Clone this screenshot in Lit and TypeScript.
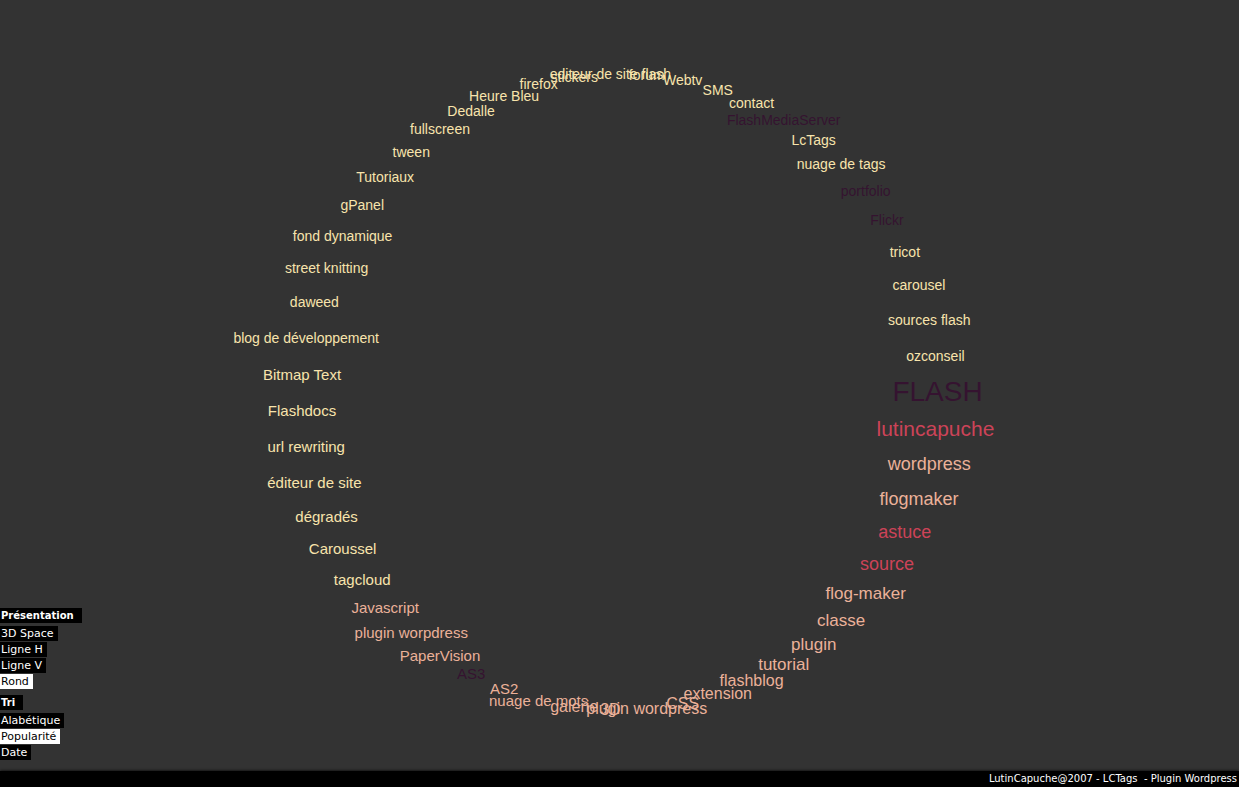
import { LitElement, html, css } from "lit";
import { customElement, state } from "lit/decorators.js";
import { classMap } from "lit/directives/class-map.js";
import { styleMap } from "lit/directives/style-map.js";

type Tone = "plum" | "red" | "peach" | "cream";
type Size = "s14" | "s15" | "s16" | "s17" | "s18" | "s21" | "s28";
interface Tag { name: string; size: Size; tone: Tone; }

const group = (size: Size, tone: Tone, ...names: string[]): Tag[] =>
  names.map((name) => ({ name, size, tone }));

// Ordered by popularity, starting at three o'clock and going clockwise.
const TAGS: Tag[] = [
  ...group("s28", "plum", "FLASH"),
  ...group("s21", "red", "lutincapuche"),
  ...group("s18", "peach", "wordpress", "flogmaker"),
  ...group("s18", "red", "astuce", "source"),
  ...group("s17", "peach", "flog-maker", "classe", "plugin", "tutorial"),
  ...group("s16", "peach", "flashblog", "extension", "CSS", "plugin wordpress", "3D", "galerie"),
  ...group("s15", "peach", "nuage de mots", "AS2"),
  ...group("s15", "plum", "AS3"),
  ...group("s15", "peach", "PaperVision", "plugin worpdress", "Javascript"),
  ...group("s15", "cream", "tagcloud", "Caroussel", "dégradés", "éditeur de site", "url rewriting",
    "Flashdocs", "Bitmap Text"),
  ...group("s14", "cream", "blog de développement", "daweed", "street knitting",
    "fond dynamique", "gPanel", "Tutoriaux", "tween", "fullscreen", "Dedalle", "Heure Bleu",
    "firefox", "stickers", "editeur de site flash", "forum", "Webtv", "SMS", "contact"),
  ...group("s14", "plum", "FlashMediaServer"),
  ...group("s14", "cream", "LcTags", "nuage de tags"),
  ...group("s14", "plum", "portfolio", "Flickr"),
  ...group("s14", "cream", "tricot", "carousel", "sources flash", "ozconseil"),
];

@customElement("tag-ring")
export class TagRing extends LitElement {
  static styles = css`
    :host { display: block; }
    .ring { position: relative; height: 100%; aspect-ratio: 1; margin: 0 auto; }
    .tag {
      position: absolute;
      transform: translate(-50%, -50%);
      white-space: nowrap;
      text-decoration: none;
      line-height: 1;
      font-family: "Liberation Sans", Arial, sans-serif;
    }
    .plum { color: #351330; }
    .red { color: #cc4358; }
    .peach { color: #ebb199; }
    .cream { color: #f8e4ac; }
    .s14 { font-size: 14px; }
    .s15 { font-size: 15px; }
    .s16 { font-size: 16px; }
    .s17 { font-size: 17px; }
    .s18 { font-size: 18px; }
    .s21 { font-size: 21px; }
    .s28 { font-size: 28px; }
  `;

  render() {
    return html`<nav class="ring" aria-label="Tags">
      ${TAGS.map((tag, i) => {
        const angle = (i / TAGS.length) * Math.PI * 2;
        const place = {
          left: `${50 + 50 * Math.cos(angle)}%`,
          top: `${50 + 50 * Math.sin(angle)}%`,
        };
        return html`<a href="#" class="tag ${tag.size} ${tag.tone}" style=${styleMap(place)}>${tag.name}</a>`;
      })}
    </nav>`;
  }
}

@customElement("app-root")
export class AppRoot extends LitElement {
  static styles = css`
    :host {
      display: flex;
      flex-direction: column;
      min-height: 100vh;
      background: #333;
      font-family: "DejaVu Sans", Verdana, sans-serif;
      font-size: 11px;
    }
    .stage { position: relative; flex: 1; padding-top: 74px; }
    .cloud { height: calc(100vh - 151px); }
    .menus {
      position: absolute;
      left: 0;
      bottom: 11px;
      display: flex;
      flex-direction: column;
      gap: 6px;
    }
    .menu { display: flex; flex-direction: column; align-items: flex-start; gap: 1px; }
    .title, .choice {
      margin: 0;
      border: 0;
      background: #000;
      color: #fff;
      font: inherit;
      line-height: 15px;
      padding: 0 4px 0 1px;
    }
    .title { font-weight: bold; font-size: 10px; padding-right: 8px; margin-bottom: 2px; }
    .active { background: #fff; color: #000; }
    .footer {
      background: #000;
      color: #fff;
      font-size: 10px;
      text-align: right;
      line-height: 16px;
      padding-right: 2px;
      box-shadow: 0 0 3px #000;
      white-space: pre;
    }
  `;

  @state() private layout = "Rond";
  @state() private order = "Popularité";

  private menu(title: string, names: string[], current: string, pick: (name: string) => void) {
    return html`<section class="menu">
      <h2 class="title">${title}</h2>
      ${names.map((name) => html`<button
        type="button"
        class=${classMap({ choice: true, active: name === current })}
        aria-pressed=${name === current}
        @click=${() => pick(name)}
      >${name}</button>`)}
    </section>`;
  }

  render() {
    return html`
      <main class="stage">
        <tag-ring class="cloud"></tag-ring>
        <div class="menus">
          ${this.menu("Présentation", ["3D Space", "Ligne H", "Ligne V", "Rond"], this.layout, (n) => { this.layout = n; })}
          ${this.menu("Tri", ["Alabétique", "Popularité", "Date"], this.order, (n) => { this.order = n; })}
        </div>
      </main>
      <footer class="footer">LutinCapuche@2007 - LCTags  - Plugin Wordpress</footer>
    `;
  }
}
